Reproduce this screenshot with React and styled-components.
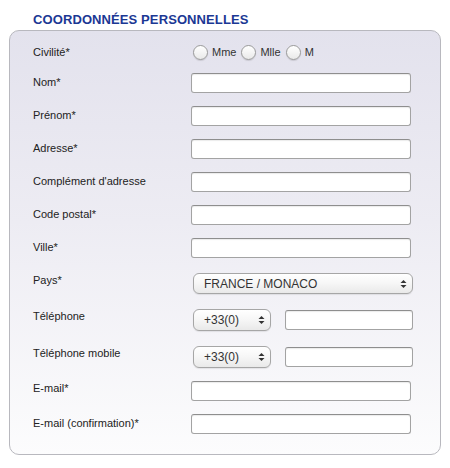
import React, { useState } from "react";
import styled, { createGlobalStyle } from "styled-components";

const GlobalStyle = createGlobalStyle`
  html, body {
    margin: 0;
    padding: 0;
    background: #ffffff;
  }
  body {
    font-family: "Liberation Sans", Arial, Helvetica, sans-serif;
    color: #222;
  }
`;

const Page = styled.div`
  width: 450px;
  height: 468px;
  box-sizing: border-box;
  padding: 12px 9px 0 9px;
`;

const Title = styled.h2`
  margin: 0 0 0 24px;
  font-size: 13px;
  line-height: 16px;
  font-weight: bold;
  color: #1b3894;
  letter-spacing: 0.1px;
`;

const Panel = styled.div`
  margin-top: 2px;
  width: 432px;
  box-sizing: border-box;
  border: 1px solid #b8b8be;
  border-radius: 10px;
  background: linear-gradient(to bottom, #e3e2ed 0%, #edecf3 45%, #fcfcfd 100%);
  padding: 12px 0 20px 23px;
`;

const Row = styled.div`
  display: flex;
  align-items: ${(p) => (p.$center ? "center" : "flex-start")};
  margin-bottom: ${(p) => p.$space}px;
  &:last-child {
    margin-bottom: 0;
  }
`;

const Label = styled.label`
  width: 158px;
  flex: none;
  font-size: 11px;
  line-height: 14px;
  padding-top: ${(p) => (p.$top === undefined ? 2 : p.$top)}px;
  color: #222;
`;

const Field = styled.div`
  display: flex;
  align-items: center;
  gap: ${(p) => p.$gap || 0}px;
`;

const TextInput = styled.input`
  box-sizing: border-box;
  width: ${(p) => p.$w}px;
  height: 20px;
  margin: 0;
  border: 1px solid #a3a3a3;
  border-top-color: #8e8e8e;
  border-radius: 3px;
  background: #fff;
  box-shadow: inset 0 1px 1px rgba(0, 0, 0, 0.08);
  font: 12px "Liberation Sans", Arial, sans-serif;
  padding: 0 4px;
  outline: none;
`;

const RadioGroup = styled.div`
  display: flex;
  align-items: center;
  height: 18px;
  margin-left: 2px;
`;

const RadioOption = styled.label`
  display: flex;
  align-items: center;
  font-size: 11px;
  color: #333;
  margin-right: 5px;
  cursor: pointer;
`;

const RadioDot = styled.span`
  box-sizing: border-box;
  width: 15px;
  height: 15px;
  border-radius: 50%;
  border: 1px solid #9a9a9a;
  background: linear-gradient(to bottom, #ffffff 0%, #e9e9e9 100%);
  box-shadow: 0 1px 1px rgba(0, 0, 0, 0.12);
  margin-right: 4px;
  display: flex;
  align-items: center;
  justify-content: center;

  &::after {
    content: "";
    width: 5px;
    height: 5px;
    border-radius: 50%;
    background: ${(p) => (p.$on ? "#333" : "transparent")};
  }
`;

const SelectWrap = styled.div`
  position: relative;
  margin-left: 2px;
  width: ${(p) => p.$w}px;
  height: ${(p) => p.$h}px;
`;

const Select = styled.select`
  appearance: none;
  -webkit-appearance: none;
  box-sizing: border-box;
  width: 100%;
  height: 100%;
  margin: 0;
  border: 1px solid #a6a6a6;
  border-radius: 6px;
  background: linear-gradient(to bottom, #ffffff 0%, #f6f6f6 50%, #e9e9e9 100%);
  box-shadow: 0 1px 1px rgba(0, 0, 0, 0.08);
  font: 12px "Liberation Sans", Arial, sans-serif;
  color: #333;
  padding: 0 0 0 10px;
  outline: none;
`;

const Arrows = styled.svg`
  position: absolute;
  right: 6px;
  top: 50%;
  transform: translateY(-50%);
  pointer-events: none;
`;

const SelectBox = ({ w, h, value, options }) => (
  <SelectWrap $w={w} $h={h}>
    <Select defaultValue={value}>
      {options.map((o) => (
        <option key={o}>{o}</option>
      ))}
    </Select>
    <Arrows width="7" height="9" viewBox="0 0 7 9">
      <path d="M3.5 0.5 L6.5 3.5 L0.5 3.5 Z" fill="#333" />
      <path d="M3.5 8.5 L6.5 5.5 L0.5 5.5 Z" fill="#333" />
    </Arrows>
  </SelectWrap>
);

const textRows = [
  { label: "Nom*", space: 13 },
  { label: "Prénom*", space: 13 },
  { label: "Adresse*", space: 13 },
  { label: "Complément d'adresse", space: 13 },
  { label: "Code postal*", space: 13 },
  { label: "Ville*", space: 15 },
];

const phoneCodes = ["+33(0)", "+32", "+41"];

export default function App() {
  const [civ, setCiv] = useState(null);

  return (
    <Page>
      <GlobalStyle />
      <Title>COORDONNÉES PERSONNELLES</Title>
      <Panel>
        <Row $center $space={12}>
          <Label $top={0}>Civilité*</Label>
          <RadioGroup>
            {["Mme", "Mlle", "M"].map((c) => (
              <RadioOption key={c} onClick={() => setCiv(c)}>
                <RadioDot $on={civ === c} />
                {c}
              </RadioOption>
            ))}
          </RadioGroup>
        </Row>

        {textRows.map((r) => (
          <Row key={r.label} $space={r.space}>
            <Label>{r.label}</Label>
            <TextInput $w={220} />
          </Row>
        ))}

        <Row $space={15}>
          <Label $top={0}>Pays*</Label>
          <SelectBox w={220} h={21} value="FRANCE / MONACO" options={["FRANCE / MONACO", "BELGIQUE", "SUISSE"]} />
        </Row>

        <Row $space={15}>
          <Label $top={0}>Téléphone</Label>
          <Field $gap={14}>
            <SelectBox w={78} h={22} value="+33(0)" options={phoneCodes} />
            <TextInput $w={128} />
          </Field>
        </Row>

        <Row $space={13}>
          <Label $top={0}>Téléphone mobile</Label>
          <Field $gap={14}>
            <SelectBox w={78} h={22} value="+33(0)" options={phoneCodes} />
            <TextInput $w={128} />
          </Field>
        </Row>

        <Row $space={13}>
          <Label $top={0}>E-mail*</Label>
          <TextInput $w={220} />
        </Row>

        <Row $space={0}>
          <Label>E-mail (confirmation)*</Label>
          <TextInput $w={220} />
        </Row>
      </Panel>
    </Page>
  );
}
